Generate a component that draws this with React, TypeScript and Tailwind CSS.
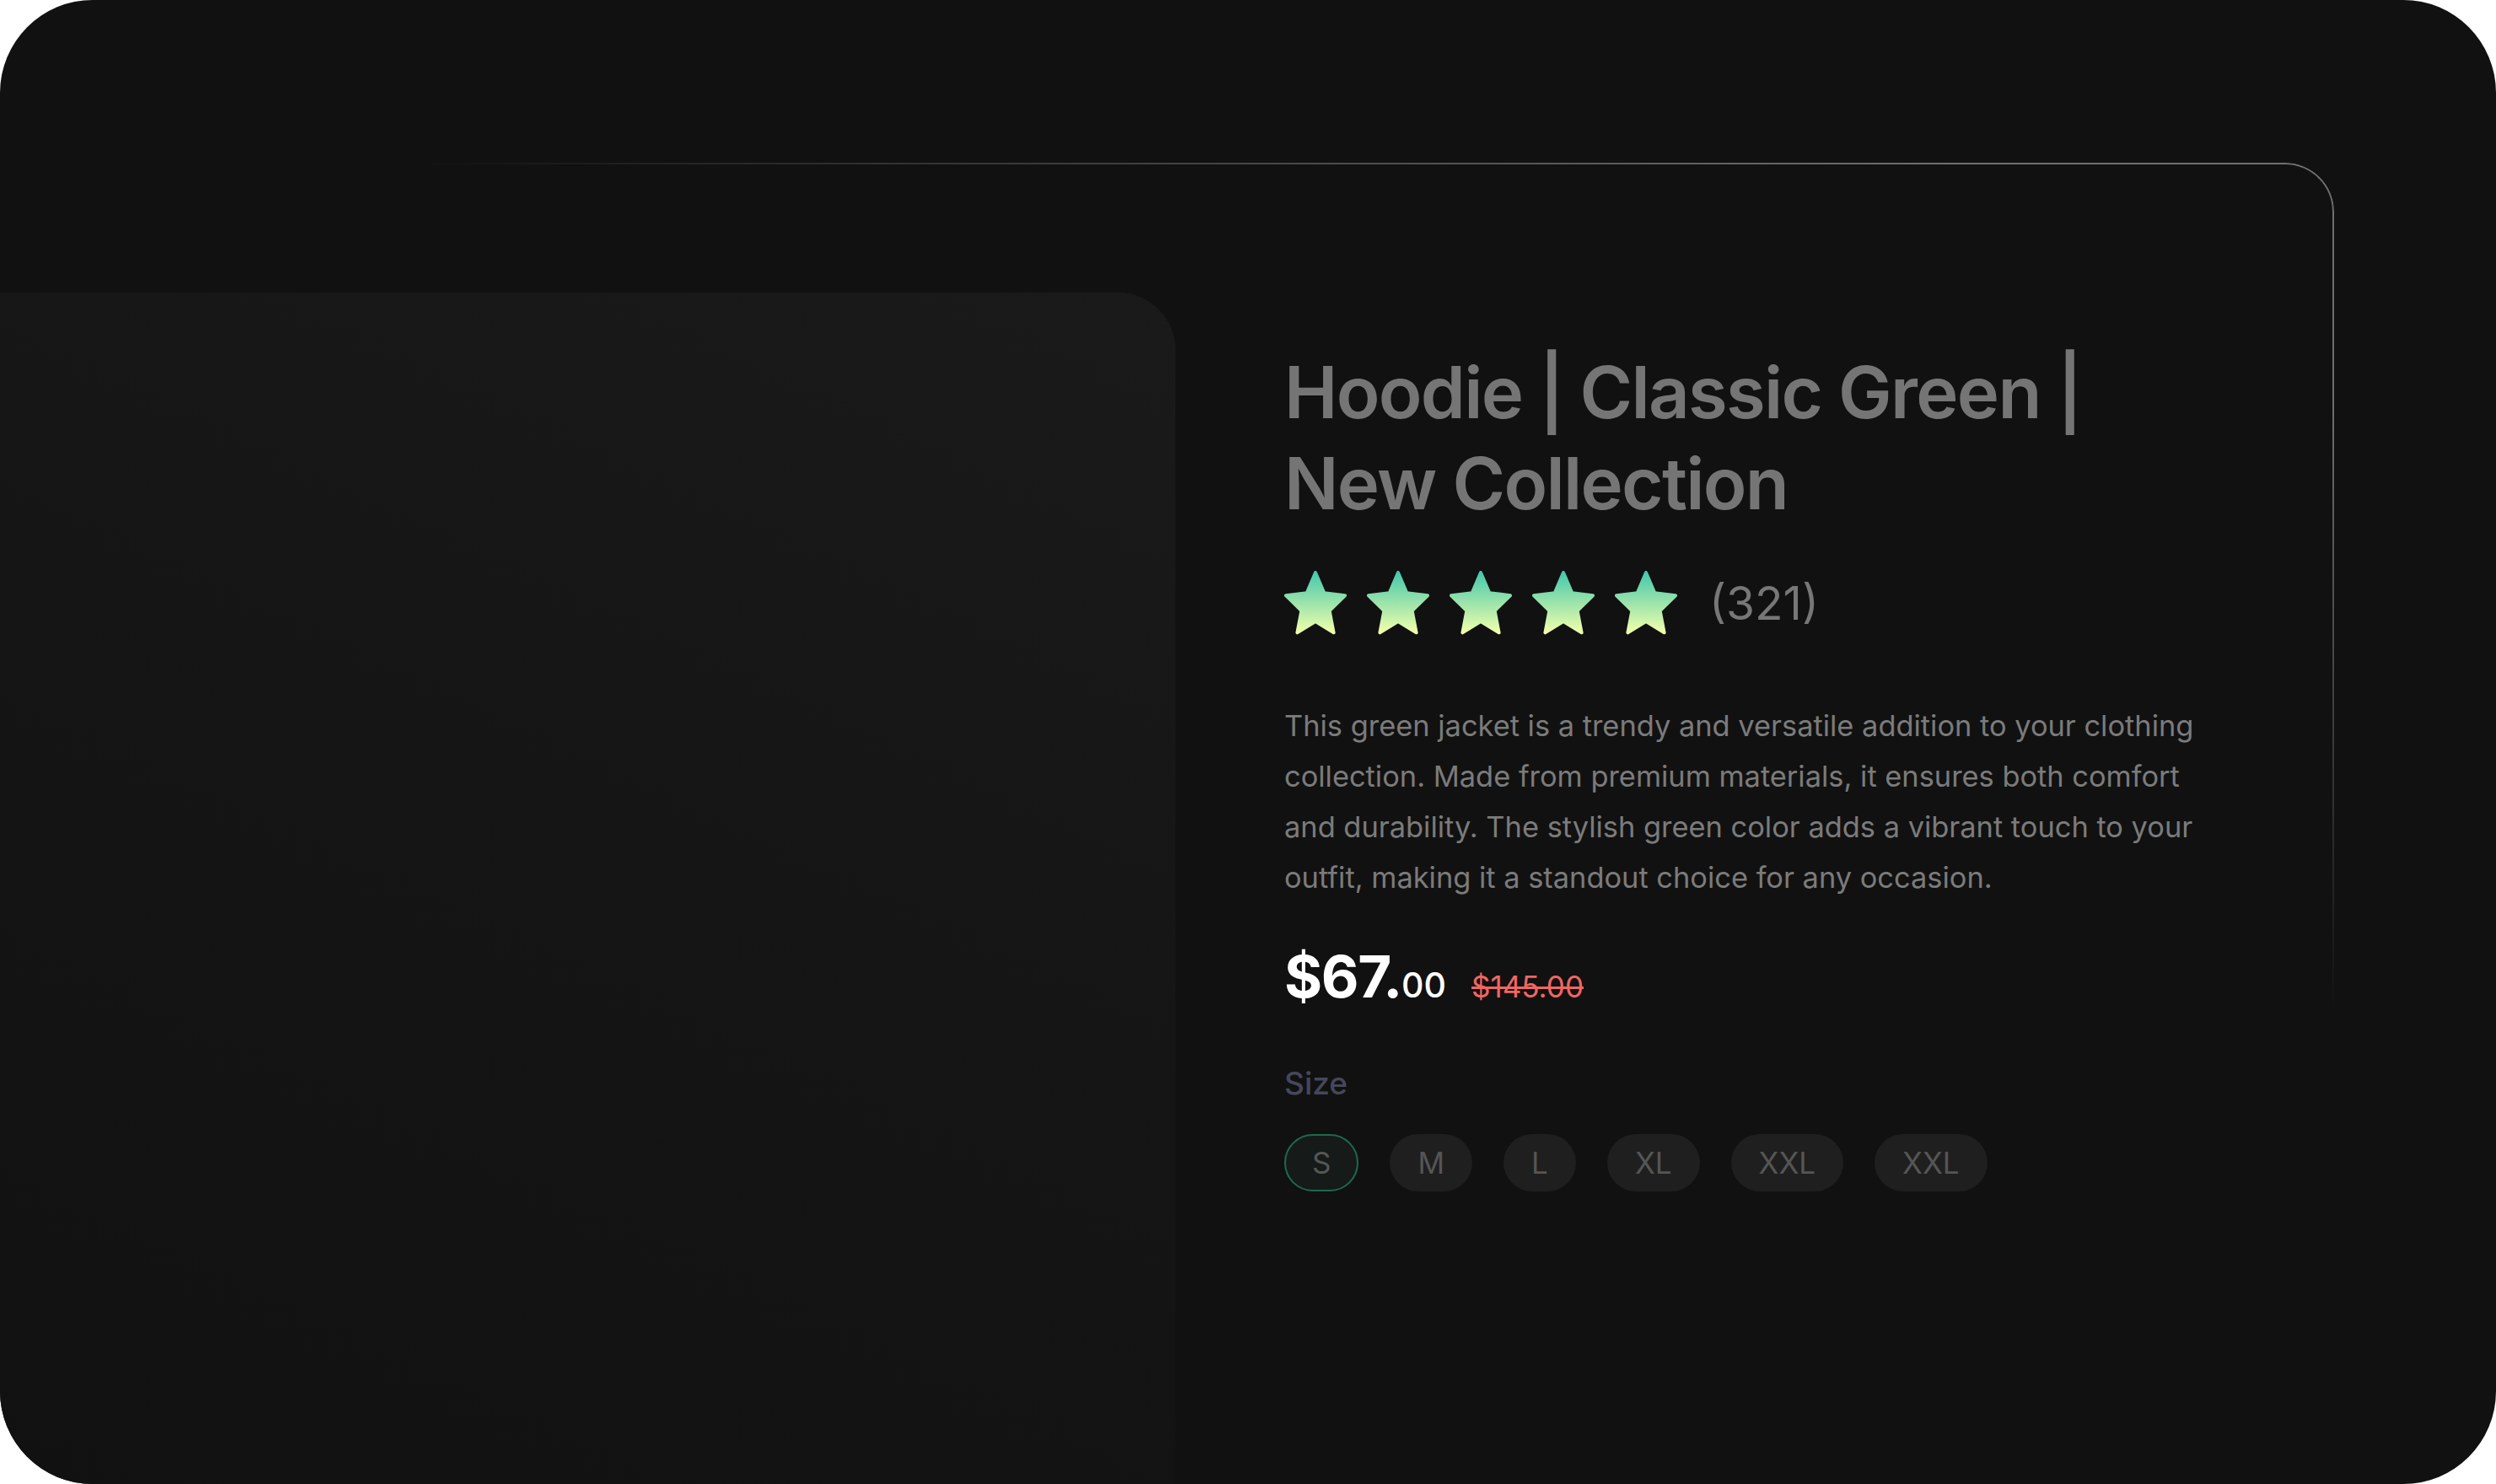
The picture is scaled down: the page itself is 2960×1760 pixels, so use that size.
import React from 'react';

const sizes = ['S', 'M', 'L', 'XL', 'XXL', 'XXL'];

function Star({ id }: { id: string }) {
  return (
    <svg width="74" height="76" viewBox="0 0 74 76" className="shrink-0">
      <defs>
        <linearGradient id={id} x1="0" y1="0" x2="0" y2="1">
          <stop offset="0%" stopColor="#46c9ab" />
          <stop offset="50%" stopColor="#9be3ab" />
          <stop offset="100%" stopColor="#f0ffaa" />
        </linearGradient>
      </defs>
      <polygon
        points="37,2 47.3,26.2 72,29.2 53.6,47.2 58.6,73.3 37,60.1 15.4,73.3 20.4,47.2 2,29.2 26.7,26.2"
        fill={`url(#${id})`}
        stroke={`url(#${id})`}
        strokeWidth="4"
        strokeLinejoin="round"
      />
    </svg>
  );
}

export default function App() {
  return (
    <div className="w-[2960px] h-[1760px] bg-white font-['Inter','Liberation_Sans',sans-serif]">
      <div className="relative flex h-full overflow-hidden rounded-[110px] bg-[#111111]">
        {/* decorative fading frame behind the details column */}
        <div className="pointer-events-none absolute left-[480px] top-[193px] h-[1100px] w-[2288px] [mask-image:linear-gradient(to_right,transparent_0%,rgba(0,0,0,0.35)_25%,black_80%)]">
          <div className="h-full w-full rounded-tr-[58px] border-t-2 border-r-2 border-[#707070] [mask-image:linear-gradient(to_bottom,black_0%,black_25%,transparent_92%)]" />
        </div>

        {/* product image panel */}
        <div className="mt-[347px] w-[1394px] shrink-0 rounded-tr-[68px] bg-[linear-gradient(205deg,#1a1a1a_0%,#151515_45%,#111111_100%)]" />

        {/* product details */}
        <div className="relative ml-[129px] flex flex-col pt-[412px]">
          <h1 className="text-[85px] font-semibold leading-[108px] tracking-[-0.02em] text-[#757575]">
            Hoodie | Classic Green |
            <br />
            New Collection
          </h1>

          <div className="mt-[49px] flex h-[76px] items-center">
            <div className="flex gap-[24px]">
              {[0, 1, 2, 3, 4].map((i) => (
                <Star key={i} id={`star-grad-${i}`} />
              ))}
            </div>
            <span className="ml-[38px] text-[55px] leading-none text-[#777777]">(321)</span>
          </div>

          <p className="mt-[78px] w-[1200px] text-[34.4px] leading-[60px] text-[#7b7b7b]">
            This green jacket is a trendy and versatile addition to your clothing
            <br />
            collection. Made from premium materials, it ensures both comfort
            <br />
            and durability. The stylish green color adds a vibrant touch to your
            <br />
            outfit, making it a standout choice for any occasion.
          </p>

          <div className="mt-[53px] flex items-baseline leading-none">
            <span className="text-[69px] font-bold tracking-[-0.02em] text-white">$67.</span>
            <span className="text-[41px] font-medium text-white">00</span>
            <span className="ml-[30px] text-[35px] text-[#ef6662] line-through">$145.00</span>
          </div>

          <div className="mt-[70px] text-[37px] font-medium leading-[44px] text-[#45475a]">Size</div>

          <div className="mt-[38px] flex gap-[37px]">
            {sizes.map((s, i) => (
              <button
                key={i}
                className={
                  i === 0
                    ? 'flex h-[68px] items-center rounded-full border-2 border-[#1d6a4d] bg-[#161a18] px-[31px] text-[35px] text-[#555555]'
                    : 'flex h-[68px] items-center rounded-full border-2 border-transparent bg-[#1f1f1f] px-[31px] text-[35px] text-[#555555]'
                }
              >
                {s}
              </button>
            ))}
          </div>
        </div>
      </div>
    </div>
  );
}
